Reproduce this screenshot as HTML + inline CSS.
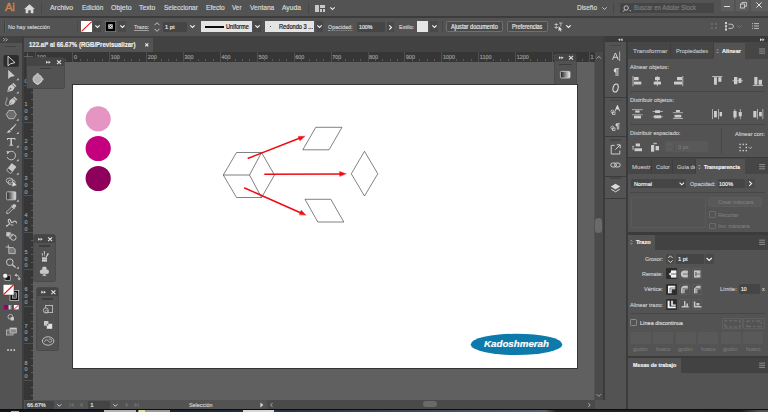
<!DOCTYPE html>
<html>
<head>
<meta charset="utf-8">
<style>
html,body{margin:0;padding:0;}
body{width:768px;height:412px;overflow:hidden;background:#535353;position:relative;font-family:"Liberation Sans",sans-serif;font-size:7px;color:#d6d6d6;}
.a{position:absolute;}
.t{position:absolute;white-space:nowrap;line-height:1;-webkit-text-stroke:0.18px currentColor;}
.m{font-size:7.6px;color:#dcdcdc;top:4.2px;}
.dk{background:#424242;}
.in{position:absolute;background:#454545;border-radius:1px;}
.bd{color:#f0f0f0;font-weight:bold;}
svg{position:absolute;overflow:visible;}
</style>
</head>
<body>
<!-- ===== base regions ===== -->
<div class="a" id="menubar" style="left:0;top:0;width:768px;height:16px;background:#535353;"></div>
<div class="a" style="left:0;top:16px;width:768px;height:1.9px;background:#3c3c3c;"></div>
<div class="a" id="ctrlbar" style="left:0;top:17.7px;width:768px;height:18.2px;background:#535353;"></div>
<div class="a" style="left:0;top:35.9px;width:768px;height:7px;background:#3e3e3e;"></div>

<!-- left toolbar -->
<div class="a" style="left:0;top:36px;width:23.5px;height:373px;background:#535353;"></div>
<div class="a" style="left:0;top:36px;width:23.5px;height:6.5px;background:#424242;"></div>
<div class="a" style="left:22px;top:36px;width:1.6px;height:373px;background:#3e3e3e;"></div>

<!-- document tab bar -->
<div class="a dk" style="left:24px;top:36px;width:581px;height:16.5px;"></div>
<div class="a" style="left:24px;top:37.5px;width:128.5px;height:15px;background:#535353;"></div>
<div class="t bd" style="left:29px;top:41.2px;font-size:7.4px;transform:scaleX(0.8203);transform-origin:0 50%;">122.ai* al 66.67% (RGB/Previsualizar)</div>

<!-- canvas -->
<div class="a" id="canvas" style="left:32.8px;top:61.5px;width:561.7px;height:338.1px;background:#606060;"></div>
<!-- rulers -->
<div class="a" id="hruler" style="left:23.6px;top:52.3px;width:571px;height:9.3px;background:#363636;"></div>
<div class="a" id="vruler" style="left:23.6px;top:61px;width:9.2px;height:338.6px;background:#363636;"></div>

<!-- artboard -->
<div class="a" id="artboard" style="left:71.9px;top:84.2px;width:503.9px;height:282.8px;background:#fff;border:1.1px solid #343434;"></div>

<!-- h ruler -->
<div class="a" style="left:35.4px;top:52.3px;width:0.7px;height:9.3px;background:#4e4e4e;"></div>
<div class="t" style="left:37.0px;top:54.5px;font-size:5.4px;color:#9c9c9c;">100</div>
<div class="a" style="left:42.8px;top:59.2px;width:0.6px;height:1.8px;background:#5a5a5a;"></div>
<div class="a" style="left:50.2px;top:59.2px;width:0.6px;height:1.8px;background:#5a5a5a;"></div>
<div class="a" style="left:57.5px;top:59.2px;width:0.6px;height:1.8px;background:#5a5a5a;"></div>
<div class="a" style="left:64.9px;top:59.2px;width:0.6px;height:1.8px;background:#5a5a5a;"></div>
<div class="a" style="left:72.3px;top:52.3px;width:0.7px;height:9.3px;background:#4e4e4e;"></div>
<div class="t" style="left:73.9px;top:54.5px;font-size:5.4px;color:#9c9c9c;">0</div>
<div class="a" style="left:79.7px;top:59.2px;width:0.6px;height:1.8px;background:#5a5a5a;"></div>
<div class="a" style="left:87.1px;top:59.2px;width:0.6px;height:1.8px;background:#5a5a5a;"></div>
<div class="a" style="left:94.4px;top:59.2px;width:0.6px;height:1.8px;background:#5a5a5a;"></div>
<div class="a" style="left:101.8px;top:59.2px;width:0.6px;height:1.8px;background:#5a5a5a;"></div>
<div class="a" style="left:109.2px;top:52.3px;width:0.7px;height:9.3px;background:#4e4e4e;"></div>
<div class="t" style="left:110.8px;top:54.5px;font-size:5.4px;color:#9c9c9c;">100</div>
<div class="a" style="left:116.6px;top:59.2px;width:0.6px;height:1.8px;background:#5a5a5a;"></div>
<div class="a" style="left:124.0px;top:59.2px;width:0.6px;height:1.8px;background:#5a5a5a;"></div>
<div class="a" style="left:131.3px;top:59.2px;width:0.6px;height:1.8px;background:#5a5a5a;"></div>
<div class="a" style="left:138.7px;top:59.2px;width:0.6px;height:1.8px;background:#5a5a5a;"></div>
<div class="a" style="left:146.1px;top:52.3px;width:0.7px;height:9.3px;background:#4e4e4e;"></div>
<div class="t" style="left:147.7px;top:54.5px;font-size:5.4px;color:#9c9c9c;">200</div>
<div class="a" style="left:153.5px;top:59.2px;width:0.6px;height:1.8px;background:#5a5a5a;"></div>
<div class="a" style="left:160.9px;top:59.2px;width:0.6px;height:1.8px;background:#5a5a5a;"></div>
<div class="a" style="left:168.2px;top:59.2px;width:0.6px;height:1.8px;background:#5a5a5a;"></div>
<div class="a" style="left:175.6px;top:59.2px;width:0.6px;height:1.8px;background:#5a5a5a;"></div>
<div class="a" style="left:183.0px;top:52.3px;width:0.7px;height:9.3px;background:#4e4e4e;"></div>
<div class="t" style="left:184.6px;top:54.5px;font-size:5.4px;color:#9c9c9c;">300</div>
<div class="a" style="left:190.4px;top:59.2px;width:0.6px;height:1.8px;background:#5a5a5a;"></div>
<div class="a" style="left:197.8px;top:59.2px;width:0.6px;height:1.8px;background:#5a5a5a;"></div>
<div class="a" style="left:205.1px;top:59.2px;width:0.6px;height:1.8px;background:#5a5a5a;"></div>
<div class="a" style="left:212.5px;top:59.2px;width:0.6px;height:1.8px;background:#5a5a5a;"></div>
<div class="a" style="left:219.9px;top:52.3px;width:0.7px;height:9.3px;background:#4e4e4e;"></div>
<div class="t" style="left:221.5px;top:54.5px;font-size:5.4px;color:#9c9c9c;">400</div>
<div class="a" style="left:227.3px;top:59.2px;width:0.6px;height:1.8px;background:#5a5a5a;"></div>
<div class="a" style="left:234.7px;top:59.2px;width:0.6px;height:1.8px;background:#5a5a5a;"></div>
<div class="a" style="left:242.0px;top:59.2px;width:0.6px;height:1.8px;background:#5a5a5a;"></div>
<div class="a" style="left:249.4px;top:59.2px;width:0.6px;height:1.8px;background:#5a5a5a;"></div>
<div class="a" style="left:256.8px;top:52.3px;width:0.7px;height:9.3px;background:#4e4e4e;"></div>
<div class="t" style="left:258.4px;top:54.5px;font-size:5.4px;color:#9c9c9c;">500</div>
<div class="a" style="left:264.2px;top:59.2px;width:0.6px;height:1.8px;background:#5a5a5a;"></div>
<div class="a" style="left:271.6px;top:59.2px;width:0.6px;height:1.8px;background:#5a5a5a;"></div>
<div class="a" style="left:278.9px;top:59.2px;width:0.6px;height:1.8px;background:#5a5a5a;"></div>
<div class="a" style="left:286.3px;top:59.2px;width:0.6px;height:1.8px;background:#5a5a5a;"></div>
<div class="a" style="left:293.7px;top:52.3px;width:0.7px;height:9.3px;background:#4e4e4e;"></div>
<div class="t" style="left:295.3px;top:54.5px;font-size:5.4px;color:#9c9c9c;">600</div>
<div class="a" style="left:301.1px;top:59.2px;width:0.6px;height:1.8px;background:#5a5a5a;"></div>
<div class="a" style="left:308.5px;top:59.2px;width:0.6px;height:1.8px;background:#5a5a5a;"></div>
<div class="a" style="left:315.8px;top:59.2px;width:0.6px;height:1.8px;background:#5a5a5a;"></div>
<div class="a" style="left:323.2px;top:59.2px;width:0.6px;height:1.8px;background:#5a5a5a;"></div>
<div class="a" style="left:330.6px;top:52.3px;width:0.7px;height:9.3px;background:#4e4e4e;"></div>
<div class="t" style="left:332.2px;top:54.5px;font-size:5.4px;color:#9c9c9c;">700</div>
<div class="a" style="left:338.0px;top:59.2px;width:0.6px;height:1.8px;background:#5a5a5a;"></div>
<div class="a" style="left:345.4px;top:59.2px;width:0.6px;height:1.8px;background:#5a5a5a;"></div>
<div class="a" style="left:352.7px;top:59.2px;width:0.6px;height:1.8px;background:#5a5a5a;"></div>
<div class="a" style="left:360.1px;top:59.2px;width:0.6px;height:1.8px;background:#5a5a5a;"></div>
<div class="a" style="left:367.5px;top:52.3px;width:0.7px;height:9.3px;background:#4e4e4e;"></div>
<div class="t" style="left:369.1px;top:54.5px;font-size:5.4px;color:#9c9c9c;">800</div>
<div class="a" style="left:374.9px;top:59.2px;width:0.6px;height:1.8px;background:#5a5a5a;"></div>
<div class="a" style="left:382.3px;top:59.2px;width:0.6px;height:1.8px;background:#5a5a5a;"></div>
<div class="a" style="left:389.6px;top:59.2px;width:0.6px;height:1.8px;background:#5a5a5a;"></div>
<div class="a" style="left:397.0px;top:59.2px;width:0.6px;height:1.8px;background:#5a5a5a;"></div>
<div class="a" style="left:404.4px;top:52.3px;width:0.7px;height:9.3px;background:#4e4e4e;"></div>
<div class="t" style="left:406.0px;top:54.5px;font-size:5.4px;color:#9c9c9c;">900</div>
<div class="a" style="left:411.8px;top:59.2px;width:0.6px;height:1.8px;background:#5a5a5a;"></div>
<div class="a" style="left:419.2px;top:59.2px;width:0.6px;height:1.8px;background:#5a5a5a;"></div>
<div class="a" style="left:426.5px;top:59.2px;width:0.6px;height:1.8px;background:#5a5a5a;"></div>
<div class="a" style="left:433.9px;top:59.2px;width:0.6px;height:1.8px;background:#5a5a5a;"></div>
<div class="a" style="left:441.3px;top:52.3px;width:0.7px;height:9.3px;background:#4e4e4e;"></div>
<div class="t" style="left:442.9px;top:54.5px;font-size:5.4px;color:#9c9c9c;">1000</div>
<div class="a" style="left:448.7px;top:59.2px;width:0.6px;height:1.8px;background:#5a5a5a;"></div>
<div class="a" style="left:456.1px;top:59.2px;width:0.6px;height:1.8px;background:#5a5a5a;"></div>
<div class="a" style="left:463.4px;top:59.2px;width:0.6px;height:1.8px;background:#5a5a5a;"></div>
<div class="a" style="left:470.8px;top:59.2px;width:0.6px;height:1.8px;background:#5a5a5a;"></div>
<div class="a" style="left:478.2px;top:52.3px;width:0.7px;height:9.3px;background:#4e4e4e;"></div>
<div class="t" style="left:479.8px;top:54.5px;font-size:5.4px;color:#9c9c9c;">1100</div>
<div class="a" style="left:485.6px;top:59.2px;width:0.6px;height:1.8px;background:#5a5a5a;"></div>
<div class="a" style="left:493.0px;top:59.2px;width:0.6px;height:1.8px;background:#5a5a5a;"></div>
<div class="a" style="left:500.3px;top:59.2px;width:0.6px;height:1.8px;background:#5a5a5a;"></div>
<div class="a" style="left:507.7px;top:59.2px;width:0.6px;height:1.8px;background:#5a5a5a;"></div>
<div class="a" style="left:515.1px;top:52.3px;width:0.7px;height:9.3px;background:#4e4e4e;"></div>
<div class="t" style="left:516.7px;top:54.5px;font-size:5.4px;color:#9c9c9c;">1200</div>
<div class="a" style="left:522.5px;top:59.2px;width:0.6px;height:1.8px;background:#5a5a5a;"></div>
<div class="a" style="left:529.9px;top:59.2px;width:0.6px;height:1.8px;background:#5a5a5a;"></div>
<div class="a" style="left:537.2px;top:59.2px;width:0.6px;height:1.8px;background:#5a5a5a;"></div>
<div class="a" style="left:544.6px;top:59.2px;width:0.6px;height:1.8px;background:#5a5a5a;"></div>
<div class="a" style="left:552.0px;top:52.3px;width:0.7px;height:9.3px;background:#4e4e4e;"></div>
<div class="t" style="left:553.6px;top:54.5px;font-size:5.4px;color:#9c9c9c;">1300</div>
<div class="a" style="left:559.4px;top:59.2px;width:0.6px;height:1.8px;background:#5a5a5a;"></div>
<div class="a" style="left:566.8px;top:59.2px;width:0.6px;height:1.8px;background:#5a5a5a;"></div>
<div class="a" style="left:574.1px;top:59.2px;width:0.6px;height:1.8px;background:#5a5a5a;"></div>
<div class="a" style="left:581.5px;top:59.2px;width:0.6px;height:1.8px;background:#5a5a5a;"></div>
<div class="a" style="left:588.9px;top:52.3px;width:0.7px;height:9.3px;background:#4e4e4e;"></div>
<!-- v ruler -->
<div class="a" style="left:23.6px;top:84.6px;width:9.2px;height:0.7px;background:#4e4e4e;"></div>
<div class="t" style="left:24.6px;top:78.9px;font-size:5.4px;color:#9c9c9c;">0</div>
<div class="a" style="left:30.6px;top:92.0px;width:2.2px;height:0.6px;background:#5a5a5a;"></div>
<div class="a" style="left:30.6px;top:99.4px;width:2.2px;height:0.6px;background:#5a5a5a;"></div>
<div class="a" style="left:30.6px;top:106.7px;width:2.2px;height:0.6px;background:#5a5a5a;"></div>
<div class="a" style="left:30.6px;top:114.1px;width:2.2px;height:0.6px;background:#5a5a5a;"></div>
<div class="a" style="left:23.6px;top:121.5px;width:9.2px;height:0.7px;background:#4e4e4e;"></div>
<div class="t" style="left:24.6px;top:102.2px;font-size:5.4px;color:#9c9c9c;">1</div>
<div class="t" style="left:24.6px;top:109.0px;font-size:5.4px;color:#9c9c9c;">0</div>
<div class="t" style="left:24.6px;top:115.8px;font-size:5.4px;color:#9c9c9c;">0</div>
<div class="a" style="left:30.6px;top:128.9px;width:2.2px;height:0.6px;background:#5a5a5a;"></div>
<div class="a" style="left:30.6px;top:136.3px;width:2.2px;height:0.6px;background:#5a5a5a;"></div>
<div class="a" style="left:30.6px;top:143.6px;width:2.2px;height:0.6px;background:#5a5a5a;"></div>
<div class="a" style="left:30.6px;top:151.0px;width:2.2px;height:0.6px;background:#5a5a5a;"></div>
<div class="a" style="left:23.6px;top:158.4px;width:9.2px;height:0.7px;background:#4e4e4e;"></div>
<div class="t" style="left:24.6px;top:139.1px;font-size:5.4px;color:#9c9c9c;">2</div>
<div class="t" style="left:24.6px;top:145.9px;font-size:5.4px;color:#9c9c9c;">0</div>
<div class="t" style="left:24.6px;top:152.7px;font-size:5.4px;color:#9c9c9c;">0</div>
<div class="a" style="left:30.6px;top:165.8px;width:2.2px;height:0.6px;background:#5a5a5a;"></div>
<div class="a" style="left:30.6px;top:173.2px;width:2.2px;height:0.6px;background:#5a5a5a;"></div>
<div class="a" style="left:30.6px;top:180.5px;width:2.2px;height:0.6px;background:#5a5a5a;"></div>
<div class="a" style="left:30.6px;top:187.9px;width:2.2px;height:0.6px;background:#5a5a5a;"></div>
<div class="a" style="left:23.6px;top:195.3px;width:9.2px;height:0.7px;background:#4e4e4e;"></div>
<div class="t" style="left:24.6px;top:176.0px;font-size:5.4px;color:#9c9c9c;">3</div>
<div class="t" style="left:24.6px;top:182.8px;font-size:5.4px;color:#9c9c9c;">0</div>
<div class="t" style="left:24.6px;top:189.6px;font-size:5.4px;color:#9c9c9c;">0</div>
<div class="a" style="left:30.6px;top:202.7px;width:2.2px;height:0.6px;background:#5a5a5a;"></div>
<div class="a" style="left:30.6px;top:210.1px;width:2.2px;height:0.6px;background:#5a5a5a;"></div>
<div class="a" style="left:30.6px;top:217.4px;width:2.2px;height:0.6px;background:#5a5a5a;"></div>
<div class="a" style="left:30.6px;top:224.8px;width:2.2px;height:0.6px;background:#5a5a5a;"></div>
<div class="a" style="left:23.6px;top:232.2px;width:9.2px;height:0.7px;background:#4e4e4e;"></div>
<div class="t" style="left:24.6px;top:212.9px;font-size:5.4px;color:#9c9c9c;">4</div>
<div class="t" style="left:24.6px;top:219.7px;font-size:5.4px;color:#9c9c9c;">0</div>
<div class="t" style="left:24.6px;top:226.5px;font-size:5.4px;color:#9c9c9c;">0</div>
<div class="a" style="left:30.6px;top:239.6px;width:2.2px;height:0.6px;background:#5a5a5a;"></div>
<div class="a" style="left:30.6px;top:247.0px;width:2.2px;height:0.6px;background:#5a5a5a;"></div>
<div class="a" style="left:30.6px;top:254.3px;width:2.2px;height:0.6px;background:#5a5a5a;"></div>
<div class="a" style="left:30.6px;top:261.7px;width:2.2px;height:0.6px;background:#5a5a5a;"></div>
<div class="a" style="left:23.6px;top:269.1px;width:9.2px;height:0.7px;background:#4e4e4e;"></div>
<div class="t" style="left:24.6px;top:249.8px;font-size:5.4px;color:#9c9c9c;">5</div>
<div class="t" style="left:24.6px;top:256.6px;font-size:5.4px;color:#9c9c9c;">0</div>
<div class="t" style="left:24.6px;top:263.4px;font-size:5.4px;color:#9c9c9c;">0</div>
<div class="a" style="left:30.6px;top:276.5px;width:2.2px;height:0.6px;background:#5a5a5a;"></div>
<div class="a" style="left:30.6px;top:283.9px;width:2.2px;height:0.6px;background:#5a5a5a;"></div>
<div class="a" style="left:30.6px;top:291.2px;width:2.2px;height:0.6px;background:#5a5a5a;"></div>
<div class="a" style="left:30.6px;top:298.6px;width:2.2px;height:0.6px;background:#5a5a5a;"></div>
<div class="a" style="left:23.6px;top:306.0px;width:9.2px;height:0.7px;background:#4e4e4e;"></div>
<div class="t" style="left:24.6px;top:286.7px;font-size:5.4px;color:#9c9c9c;">6</div>
<div class="t" style="left:24.6px;top:293.5px;font-size:5.4px;color:#9c9c9c;">0</div>
<div class="t" style="left:24.6px;top:300.3px;font-size:5.4px;color:#9c9c9c;">0</div>
<div class="a" style="left:30.6px;top:313.4px;width:2.2px;height:0.6px;background:#5a5a5a;"></div>
<div class="a" style="left:30.6px;top:320.8px;width:2.2px;height:0.6px;background:#5a5a5a;"></div>
<div class="a" style="left:30.6px;top:328.1px;width:2.2px;height:0.6px;background:#5a5a5a;"></div>
<div class="a" style="left:30.6px;top:335.5px;width:2.2px;height:0.6px;background:#5a5a5a;"></div>
<div class="a" style="left:23.6px;top:342.9px;width:9.2px;height:0.7px;background:#4e4e4e;"></div>
<div class="t" style="left:24.6px;top:323.6px;font-size:5.4px;color:#9c9c9c;">7</div>
<div class="t" style="left:24.6px;top:330.4px;font-size:5.4px;color:#9c9c9c;">0</div>
<div class="t" style="left:24.6px;top:337.2px;font-size:5.4px;color:#9c9c9c;">0</div>
<div class="a" style="left:30.6px;top:350.3px;width:2.2px;height:0.6px;background:#5a5a5a;"></div>
<div class="a" style="left:30.6px;top:357.7px;width:2.2px;height:0.6px;background:#5a5a5a;"></div>
<div class="a" style="left:30.6px;top:365.0px;width:2.2px;height:0.6px;background:#5a5a5a;"></div>
<div class="a" style="left:30.6px;top:372.4px;width:2.2px;height:0.6px;background:#5a5a5a;"></div>
<div class="a" style="left:23.6px;top:379.8px;width:9.2px;height:0.7px;background:#4e4e4e;"></div>
<div class="t" style="left:24.6px;top:360.5px;font-size:5.4px;color:#9c9c9c;">8</div>
<div class="t" style="left:24.6px;top:367.3px;font-size:5.4px;color:#9c9c9c;">0</div>
<div class="t" style="left:24.6px;top:374.1px;font-size:5.4px;color:#9c9c9c;">0</div>
<div class="a" style="left:30.6px;top:387.2px;width:2.2px;height:0.6px;background:#5a5a5a;"></div>
<div class="a" style="left:30.6px;top:394.6px;width:2.2px;height:0.6px;background:#5a5a5a;"></div>
<div class="a" style="left:30.6px;top:77.2px;width:2.2px;height:0.6px;background:#5a5a5a;"></div>
<div class="a" style="left:30.6px;top:69.8px;width:2.2px;height:0.6px;background:#5a5a5a;"></div>
<div class="a" style="left:30.6px;top:62.5px;width:2.2px;height:0.6px;background:#5a5a5a;"></div>
<div class="a" style="left:23.6px;top:52.3px;width:9.2px;height:9.3px;background:#363636;"></div>
<div class="a" style="left:24px;top:55.6px;width:9px;height:0.6px;background:#626262;"></div>
<div class="a" style="left:27.2px;top:52.5px;width:0.6px;height:9.3px;background:#626262;"></div>
<!-- artwork -->
<svg style="left:0;top:0;" width="768" height="412" viewBox="0 0 768 412">
<circle cx="98.2" cy="118.8" r="12.6" fill="#e495c4"/>
<circle cx="98.2" cy="148.5" r="12.6" fill="#c4007f"/>
<circle cx="98.2" cy="178.5" r="12.6" fill="#8e005c"/>
<g fill="none" stroke="#2e2e2e" stroke-width="0.6">
<path d="M236.5 152.5 L261.5 152.5 L274.5 175 L261.5 197.5 L236.5 197.5 L223.3 175 Z"/>
<path d="M223.3 175 L249.5 175 M249.5 175 L261.5 152.5 M249.5 175 L261.5 197.5" stroke="#2a2a2a" stroke-width="0.6"/>
<path d="M315.8 127.3 L342 127.3 L329 149.8 L302.8 149.8 Z"/>
<path d="M364.5 151.3 L377.8 173.8 L364.5 196 L351.3 173.8 Z"/>
<path d="M305 199.3 L330.8 199.3 L343.8 222 L317.8 222 Z"/>
</g>
<g stroke="#f00a12" stroke-width="1.5" fill="#ee0a12" stroke-linecap="round">
<path d="M248.3 158.2 L300 138"/><path d="M304.8 136.2 L298.2 136.5 L299.9 140.7 Z" stroke-width="0.4"/>
<path d="M264.8 174.3 L340 173.9"/><path d="M346 173.8 L339.6 171.5 L339.7 176.2 Z" stroke-width="0.4"/>
<path d="M244.6 188 L300.5 212.7"/><path d="M305.8 215 L301.2 210.2 L299.3 214.6 Z" stroke-width="0.4"/>
</g>
<ellipse cx="516.5" cy="344.4" rx="45.8" ry="10.7" fill="#0c7aaa"/>
</svg>
<div class="t" style="left:484px;top:340px;font-size:9.2px;font-weight:bold;font-style:italic;color:#fff;transform:scaleX(1.0607);transform-origin:0 50%;">Kadoshmerah</div>

<!-- scrollbars / status -->
<div class="a" style="left:594.5px;top:52.3px;width:9px;height:347.3px;background:#4a4a4a;"></div>

<div class="a" style="left:603.5px;top:36px;width:1.5px;height:372px;background:#383838;"></div>

<!-- right dock -->
<div class="a" style="left:603.4px;top:36px;width:164.60px;height:373.00px;background:#3b3b3b;"></div>
<div class="a" style="left:603.4px;top:36px;width:1.80px;height:17.00px;background:#3e3e3e;"></div>
<div class="a" style="left:605.2px;top:42.3px;width:20.40px;height:366.70px;background:#535353;"></div>
<div class="a" style="left:610px;top:44.6px;width:10.80px;height:1.50px;background:#464646;"></div>
<div class="a" style="left:605.2px;top:97px;width:20.40px;height:1.00px;background:#3b3b3b;"></div>
<div class="a" style="left:610px;top:99.6px;width:10.80px;height:1.50px;background:#464646;"></div>
<div class="a" style="left:605.2px;top:136.4px;width:20.40px;height:1.00px;background:#3b3b3b;"></div>
<div class="a" style="left:610px;top:139.0px;width:10.80px;height:1.50px;background:#464646;"></div>
<div class="a" style="left:605.2px;top:175.6px;width:20.40px;height:1.00px;background:#3b3b3b;"></div>
<div class="a" style="left:610px;top:177.1px;width:10.80px;height:1.50px;background:#464646;"></div>
<div class="a" style="left:605.2px;top:197.9px;width:20.40px;height:1.00px;background:#3b3b3b;"></div>
<div class="a" style="left:627.6px;top:42.3px;width:140.40px;height:16.50px;background:#464646;"></div>
<div class="a" style="left:713.3px;top:43.4px;width:31.70px;height:15.40px;background:#535353;"></div>
<div class="a" style="left:669.8px;top:43.4px;width:0.80px;height:14.80px;background:#3e3e3e;"></div>
<div class="a" style="left:712.6px;top:43.4px;width:0.70px;height:14.80px;background:#3e3e3e;"></div>
<div class="a" style="left:627.6px;top:58.8px;width:140.40px;height:98.20px;background:#535353;"></div>
<div class="t" style="left:632.7px;top:48.10px;font-size:6.2px;color:#bdbdbd;transform:scaleX(1.0308);transform-origin:0 50%;">Transformar</div>
<div class="t" style="left:675.8px;top:48.10px;font-size:6.2px;color:#bdbdbd;transform:scaleX(0.9209);transform-origin:0 50%;">Propiedades</div>
<div class="t" style="left:722px;top:48.10px;font-size:6.2px;color:#f2f2f2;font-weight:bold;transform:scaleX(0.9054);transform-origin:0 50%;">Alinear</div>
<div class="t" style="left:630px;top:63.60px;font-size:6.2px;color:#c8c8c8;transform:scaleX(0.9073);transform-origin:0 50%;">Alinear objetos:</div>
<div class="a" style="left:630px;top:91.2px;width:135.40px;height:0.70px;background:#474747;"></div>
<div class="t" style="left:630px;top:96.90px;font-size:6.2px;color:#c8c8c8;transform:scaleX(0.9203);transform-origin:0 50%;">Distribuir objetos:</div>
<div class="a" style="left:630px;top:123.5px;width:135.40px;height:0.70px;background:#474747;"></div>
<div class="t" style="left:630px;top:130.20px;font-size:6.2px;color:#c8c8c8;transform:scaleX(0.8990);transform-origin:0 50%;">Distribuir espaciado:</div>
<div class="t" style="left:735.3px;top:130.70px;font-size:6.2px;color:#c8c8c8;transform:scaleX(0.9086);transform-origin:0 50%;">Alinear con:</div>
<div class="a" style="left:721.4px;top:128.4px;width:0.70px;height:25.80px;background:#474747;"></div>
<div class="a" style="left:665.3px;top:141px;width:42.80px;height:11.40px;background:#595959;border-radius:1px;"></div>
<div class="a" style="left:674px;top:141px;width:0.60px;height:11.40px;background:#535353;"></div>
<div class="t" style="left:677.5px;top:143.90px;font-size:6.2px;color:#787878;transform:scaleX(0.8972);transform-origin:0 50%;">0 px</div>
<div class="a" style="left:627.6px;top:158px;width:140.40px;height:16.00px;background:#464646;"></div>
<div class="a" style="left:696px;top:159px;width:49.00px;height:15.00px;background:#535353;"></div>
<div class="a" style="left:651.4px;top:159px;width:0.70px;height:14.40px;background:#3e3e3e;"></div>
<div class="a" style="left:672.3px;top:159px;width:0.70px;height:14.40px;background:#3e3e3e;"></div>
<div class="a" style="left:695.4px;top:159px;width:0.60px;height:14.40px;background:#3e3e3e;"></div>
<div class="a" style="left:627.6px;top:174px;width:140.40px;height:58.30px;background:#535353;"></div>
<div class="t" style="left:632.3px;top:163.80px;font-size:6.2px;color:#bdbdbd;transform:scaleX(0.9777);transform-origin:0 50%;">Muestr</div>
<div class="t" style="left:656.1px;top:163.80px;font-size:6.2px;color:#bdbdbd;transform:scaleX(0.9326);transform-origin:0 50%;">Color</div>
<div class="a" style="left:676.7px;top:162px;width:18.7px;height:10px;overflow:hidden;"><div class="t" style="left:0px;top:1.80px;font-size:6.2px;color:#bdbdbd;transform:scaleX(0.8942);transform-origin:0 50%;">Guía de</div>
</div>
<div class="t" style="left:704.3px;top:163.80px;font-size:6.2px;color:#f2f2f2;font-weight:bold;transform:scaleX(0.8578);transform-origin:0 50%;">Transparencia</div>
<div class="a" style="left:631px;top:178.8px;width:55.00px;height:9.70px;background:#454545;border-radius:1.5px;"></div>
<div class="t" style="left:634px;top:180.60px;font-size:6.2px;color:#f0f0f0;transform:scaleX(0.9021);transform-origin:0 50%;">Normal</div>
<div class="t" style="left:689.6px;top:180.60px;font-size:6.2px;color:#c8c8c8;transform:scaleX(0.8966);transform-origin:0 50%;">Opacidad:</div>
<div class="a" style="left:717.6px;top:178.6px;width:27.40px;height:9.90px;background:#454545;border-radius:1.5px;"></div>
<div class="t" style="left:719.1px;top:180.60px;font-size:6.2px;color:#f0f0f0;transform:scaleX(0.8845);transform-origin:0 50%;">100%</div>
<div class="a" style="left:746px;top:178.6px;width:9.00px;height:9.90px;background:#4b4b4b;border-radius:1px;"></div>
<div class="a" style="left:630px;top:192.4px;width:135.40px;height:0.70px;background:#474747;"></div>
<div class="a" style="left:630.7px;top:197.3px;width:75.50px;height:31.00px;background:#535353;box-sizing:border-box;border:0.7px solid #5a5a5a;border-radius:1px;"></div>
<div class="a" style="left:708.1px;top:196.6px;width:54.40px;height:10.90px;background:#595959;box-sizing:border-box;border:0.7px solid #5c5c5c;border-radius:1.5px;"></div>
<div class="t" style="left:717.6px;top:199.00px;font-size:6.2px;color:#787878;transform:scaleX(0.8675);transform-origin:0 50%;">Crear máscara</div>
<div class="a" style="left:709.1px;top:211.4px;width:6.80px;height:6.30px;background:#535353;box-sizing:border-box;border:0.7px solid #6a6a6a;border-radius:1px;"></div>
<div class="t" style="left:718.3px;top:211.70px;font-size:6.2px;color:#787878;transform:scaleX(0.8595);transform-origin:0 50%;">Recortar</div>
<div class="a" style="left:709.1px;top:222.5px;width:6.80px;height:6.40px;background:#535353;box-sizing:border-box;border:0.7px solid #6a6a6a;border-radius:1px;"></div>
<div class="t" style="left:718.3px;top:222.80px;font-size:6.2px;color:#787878;transform:scaleX(0.9037);transform-origin:0 50%;">Inv. máscara</div>
<div class="a" style="left:627.6px;top:234.5px;width:140.40px;height:15.30px;background:#424242;"></div>
<div class="a" style="left:627.6px;top:234.5px;width:27.50px;height:15.30px;background:#535353;"></div>
<div class="a" style="left:627.6px;top:249.8px;width:140.40px;height:106.20px;background:#535353;"></div>
<div class="t" style="left:635.7px;top:239.20px;font-size:6.2px;color:#f2f2f2;font-weight:bold;transform:scaleX(0.9028);transform-origin:0 50%;">Trazo</div>
<div class="t" style="left:645px;top:256.40px;font-size:6.2px;color:#c8c8c8;transform:scaleX(0.8769);transform-origin:0 50%;">Grosor:</div>
<div class="a" style="left:666.3px;top:254.2px;width:8.20px;height:9.80px;background:#494949;border-radius:1px;"></div>
<div class="a" style="left:676px;top:254.2px;width:27.60px;height:9.80px;background:#454545;border-radius:1px;"></div>
<div class="t" style="left:677.5px;top:256.20px;font-size:6.2px;color:#f0f0f0;transform:scaleX(0.9392);transform-origin:0 50%;">1 pt</div>
<div class="a" style="left:704.7px;top:254.2px;width:9.30px;height:9.80px;background:#494949;border-radius:1px;"></div>
<div class="t" style="left:642.3px;top:271.10px;font-size:6.2px;color:#c8c8c8;transform:scaleX(0.8807);transform-origin:0 50%;">Remate:</div>
<div class="t" style="left:644px;top:286.30px;font-size:6.2px;color:#c8c8c8;transform:scaleX(0.9007);transform-origin:0 50%;">Vértice:</div>
<div class="t" style="left:630px;top:301.90px;font-size:6.2px;color:#c8c8c8;transform:scaleX(0.9021);transform-origin:0 50%;">Alinear trazo:</div>
<div class="a" style="left:665.8px;top:268.4px;width:11.20px;height:10.60px;background:#2d2d2d;border-radius:1px;"></div>
<div class="a" style="left:678.9px;top:268.4px;width:10.70px;height:10.60px;background:#535353;box-sizing:border-box;border:0.6px solid #5c5c5c;border-radius:1px;"></div>
<div class="a" style="left:692px;top:268.4px;width:10.30px;height:10.60px;background:#535353;box-sizing:border-box;border:0.6px solid #5c5c5c;border-radius:1px;"></div>
<div class="a" style="left:665.8px;top:283.9px;width:11.20px;height:10.70px;background:#2d2d2d;border-radius:1px;"></div>
<div class="a" style="left:678.9px;top:283.9px;width:10.70px;height:10.70px;background:#535353;box-sizing:border-box;border:0.6px solid #5c5c5c;border-radius:1px;"></div>
<div class="a" style="left:692px;top:283.9px;width:10.30px;height:10.70px;background:#535353;box-sizing:border-box;border:0.6px solid #5c5c5c;border-radius:1px;"></div>
<div class="a" style="left:665.8px;top:299.1px;width:11.20px;height:10.50px;background:#2d2d2d;border-radius:1px;"></div>
<div class="a" style="left:678.9px;top:299.1px;width:10.70px;height:10.50px;background:#535353;box-sizing:border-box;border:0.6px solid #5c5c5c;border-radius:1px;"></div>
<div class="a" style="left:692px;top:299.1px;width:10.30px;height:10.50px;background:#535353;box-sizing:border-box;border:0.6px solid #5c5c5c;border-radius:1px;"></div>
<div class="t" style="left:720.1px;top:286.10px;font-size:6.2px;color:#c8c8c8;transform:scaleX(0.8989);transform-origin:0 50%;">Límite:</div>
<div class="a" style="left:738.7px;top:283.9px;width:21.40px;height:9.70px;background:#454545;border-radius:1.5px;"></div>
<div class="t" style="left:741.4px;top:285.90px;font-size:6.2px;color:#f0f0f0;transform:scaleX(0.8127);transform-origin:0 50%;">10</div>
<div class="t" style="left:762.4px;top:286.10px;font-size:6.2px;color:#c8c8c8;transform:scaleX(0.9051);transform-origin:0 50%;">x</div>
<div class="a" style="left:630px;top:313.2px;width:135.40px;height:0.70px;background:#474747;"></div>
<div class="a" style="left:630.4px;top:319.3px;width:7.10px;height:7.00px;background:#535353;box-sizing:border-box;border:0.8px solid #8a8a8a;border-radius:1.2px;"></div>
<div class="t" style="left:640.4px;top:320.10px;font-size:6.2px;color:#dedede;transform:scaleX(0.8843);transform-origin:0 50%;">Línea discontinua</div>
<div class="a" style="left:722px;top:317.6px;width:21.10px;height:11.90px;background:#535353;box-sizing:border-box;border:0.6px solid #5e5e5e;border-radius:1px;"></div>
<div class="a" style="left:743.1px;top:317.6px;width:21.90px;height:11.90px;background:#535353;box-sizing:border-box;border:0.6px solid #5e5e5e;border-radius:1px;"></div>
<div class="a" style="left:630.5px;top:332.2px;width:20.00px;height:11.80px;background:#595959;border-radius:1px;"></div>
<div class="t" style="left:633.3px;top:346.20px;font-size:6.2px;color:#747474;transform:scaleX(0.9511);transform-origin:0 50%;">guión</div>
<div class="a" style="left:653.0px;top:332.2px;width:20.00px;height:11.80px;background:#595959;border-radius:1px;"></div>
<div class="t" style="left:655.8px;top:346.20px;font-size:6.2px;color:#747474;transform:scaleX(0.8541);transform-origin:0 50%;">hueco</div>
<div class="a" style="left:675.5px;top:332.2px;width:20.00px;height:11.80px;background:#595959;border-radius:1px;"></div>
<div class="t" style="left:678.3px;top:346.20px;font-size:6.2px;color:#747474;transform:scaleX(0.9511);transform-origin:0 50%;">guión</div>
<div class="a" style="left:698.0px;top:332.2px;width:20.00px;height:11.80px;background:#595959;border-radius:1px;"></div>
<div class="t" style="left:700.8px;top:346.20px;font-size:6.2px;color:#747474;transform:scaleX(0.8541);transform-origin:0 50%;">hueco</div>
<div class="a" style="left:720.5px;top:332.2px;width:20.00px;height:11.80px;background:#595959;border-radius:1px;"></div>
<div class="t" style="left:723.3px;top:346.20px;font-size:6.2px;color:#747474;transform:scaleX(0.9511);transform-origin:0 50%;">guión</div>
<div class="a" style="left:743.0px;top:332.2px;width:20.00px;height:11.80px;background:#595959;border-radius:1px;"></div>
<div class="t" style="left:745.8px;top:346.20px;font-size:6.2px;color:#747474;transform:scaleX(0.8541);transform-origin:0 50%;">hueco</div>
<div class="a" style="left:627.6px;top:357.6px;width:140.40px;height:15.20px;background:#424242;"></div>
<div class="a" style="left:627.6px;top:357.6px;width:53.40px;height:15.20px;background:#535353;"></div>
<div class="a" style="left:627.6px;top:373.4px;width:140.40px;height:35.60px;background:#535353;"></div>
<div class="t" style="left:632.5px;top:362.20px;font-size:6.2px;color:#f2f2f2;font-weight:bold;transform:scaleX(0.8622);transform-origin:0 50%;">Mesas de trabajo</div>
<svg style="left:0;top:0" width="768" height="412" viewBox="0 0 768 412">
<path d="M620.2 38.2 v3 L618 39.7z M622.6 38.2 v3 L620.4 39.7z" fill="#d8d8d8"/><path d="M760 38.2 v3 L762.2 39.7z M762.4 38.2 v3 L764.6 39.7z" fill="#d8d8d8"/><path d="M759.1 49.0 h6 M759.1 51.1 h6 M759.1 53.2 h6" stroke="#a0a0a0" stroke-width="0.8"/><path d="M759.1 164.6 h6 M759.1 166.7 h6 M759.1 168.79999999999998 h6" stroke="#a0a0a0" stroke-width="0.8"/><path d="M759.1 240.2 h6 M759.1 242.29999999999998 h6 M759.1 244.39999999999998 h6" stroke="#a0a0a0" stroke-width="0.8"/><path d="M759.1 363.2 h6 M759.1 365.3 h6 M759.1 367.4 h6" stroke="#a0a0a0" stroke-width="0.8"/><path d="M716.7 50.4 L717.6 49.3 L718.5 50.4 M716.7 52.0 L717.6 53.1 L718.5 52.0" fill="none" stroke="#cfcfcf" stroke-width="0.6"/><path d="M698.5 166.1 L699.4 165.0 L700.3 166.1 M698.5 167.7 L699.4 168.8 L700.3 167.7" fill="none" stroke="#cfcfcf" stroke-width="0.6"/><path d="M630.5 241.5 L631.4 240.4 L632.3 241.5 M630.5 243.1 L631.4 244.2 L632.3 243.1" fill="none" stroke="#cfcfcf" stroke-width="0.6"/><g fill="#cdcdcd"><rect x="632.6" y="76" width="0.8" height="10.2"/><rect x="634" y="77" width="4.6" height="3.2"/><rect x="634" y="81.6" width="7.3" height="2.9"/><rect x="656.9" y="76" width="0.8" height="10.2"/><rect x="655" y="77" width="4.8" height="3.2"/><rect x="653.7" y="81.6" width="7.3" height="2.9"/><rect x="682.4" y="76" width="0.8" height="10.2"/><rect x="677" y="77" width="5" height="3.2"/><rect x="674" y="81.6" width="8" height="2.9"/><rect x="712" y="76" width="10.4" height="0.8"/><rect x="714" y="77.2" width="2.9" height="7.5"/><rect x="718.3" y="77.2" width="3.1" height="4.6"/><rect x="732.4" y="80.4" width="10.4" height="0.8"/><rect x="734" y="77" width="3.3" height="7.2"/><rect x="738.5" y="78.2" width="2.9" height="4.8"/><rect x="752.8" y="85" width="10.2" height="0.8"/><rect x="754.3" y="77" width="3.1" height="7.7"/><rect x="758.6" y="79.8" width="3.4" height="4.9"/><rect x="632" y="109.4" width="10.7" height="0.7"/><rect x="635.2" y="110.5" width="4.4" height="2.1"/><rect x="632" y="114.5" width="10.7" height="0.7"/><rect x="634" y="115.7" width="7" height="2.7"/><rect x="652.7" y="111.3" width="10.2" height="0.7"/><rect x="655.1" y="110.2" width="4.9" height="2.8"/><rect x="652.7" y="116.5" width="10.2" height="0.7"/><rect x="654.2" y="115.3" width="6.9" height="3"/><rect x="676" y="110" width="3.9" height="2.1"/><rect x="672.9" y="112.4" width="10.1" height="0.7"/><rect x="674.5" y="114.8" width="6.8" height="2.7"/><rect x="672.9" y="118" width="10.1" height="0.7"/><rect x="712.2" y="109" width="0.7" height="10.2"/><rect x="714" y="111" width="2.9" height="6.4"/><rect x="718.2" y="109" width="0.7" height="10.2"/><rect x="719.6" y="112" width="2.4" height="4.3"/><rect x="734.5" y="109" width="0.7" height="10.2"/><rect x="733.4" y="111" width="3.2" height="6.4"/><rect x="739.9" y="109" width="0.7" height="10.2"/><rect x="738.7" y="112" width="3.1" height="4.3"/><rect x="753.3" y="111" width="3.1" height="6.4"/><rect x="757.1" y="109" width="0.7" height="10.2"/><rect x="759.1" y="112" width="2.7" height="4.3"/><rect x="762.5" y="109" width="0.7" height="10.2"/><rect x="635.7" y="143.5" width="4.3" height="2.9"/><rect x="634.5" y="148.3" width="7.5" height="2.9"/><rect x="632.3" y="146.2" width="1.6" height="0.7"/><rect x="632.3" y="148.6" width="1.6" height="0.7"/><rect x="632.7" y="145.8" width="0.7" height="3.6"/><rect x="651" y="145" width="3.2" height="6.7"/><rect x="655.6" y="146" width="3.4" height="4.3"/><rect x="653.8" y="142.6" width="0.7" height="1.8"/><rect x="655.6" y="142.6" width="0.7" height="1.8"/><rect x="653.4" y="143.2" width="3.4" height="0.7"/></g>
<path d="M667.6 145.4 L669.6 143.4 L671.6 145.4 M667.6 148.2 L669.6 150.2 L671.6 148.2" fill="none" stroke="#6c6c6c" stroke-width="0.8"/><g fill="#cdcdcd"><rect x="739.4" y="143.7" width="1.4" height="1.4"/><rect x="739.4" y="146.8" width="1.4" height="1.4"/><rect x="739.4" y="149.9" width="1.4" height="1.4"/><rect x="742.5" y="143.7" width="1.4" height="1.4"/><rect x="742.5" y="149.9" width="1.4" height="1.4"/><rect x="745.6" y="143.7" width="1.4" height="1.4"/><rect x="745.6" y="146.8" width="1.4" height="1.4"/><rect x="745.6" y="149.9" width="1.4" height="1.4"/></g><path d="M748.4 146.8 L750.2 148.6 L752 146.8" fill="none" stroke="#cdcdcd" stroke-width="0.8"/><path d="M679.6 182.6 L681.8 184.8 L684 182.6" fill="none" stroke="#f0f0f0" stroke-width="1.1"/><path d="M749.2 181.4 L751.6 183.6 L749.2 185.8" fill="none" stroke="#f0f0f0" stroke-width="1.1"/><path d="M668.2 258 L670.4 255.8 L672.6 258 M668.2 260.4 L670.4 262.6 L672.6 260.4" fill="none" stroke="#e8e8e8" stroke-width="0.9"/><path d="M706.6 258 L709.2 260.4 L711.8 258" fill="none" stroke="#f4f4f4" stroke-width="1.2"/><path d="M671 270.4 h5.4 v7.2 h-5.4 z" fill="#f4f4f4"/><path d="M668.6 274 L671 272.2 V275.8Z" fill="#f4f4f4"/><path d="M671 274 h5.4" stroke="#2d2d2d" stroke-width="0.7"/><path d="M684.4 270.4 h3.4 v7.2 h-3.4 a3.6 3.6 0 0 1 0 -7.2z" fill="#c4c4c4"/><path d="M683 274 h4.8" stroke="#535353" stroke-width="0.7"/><path d="M694 270.4 h6.4 v7.2 h-6.4z" fill="#c4c4c4"/><path d="M696 274 h4.4" stroke="#535353" stroke-width="0.7"/><rect x="695.4" y="272" width="1" height="4" fill="#535353"/><path d="M668 285.8 h7.2 v3.4 h-3.6 v4 h-3.6z" fill="#f4f4f4"/><path d="M670 292.6 v-4.6 h5" fill="none" stroke="#2d2d2d" stroke-width="0.6"/><path d="M681 293.2 v-3.6 a3.8 3.8 0 0 1 3.8 -3.8 h3 v3.4 h-3.2 v4z" fill="#c4c4c4"/><path d="M683 293 v-4.6 h4.8" fill="none" stroke="#535353" stroke-width="0.6"/><path d="M694 293.2 v-4.4 l3 -3 h3.6 v3.4 h-3.2 v4z" fill="#c4c4c4"/><path d="M696 293 v-4.6 h4.6" fill="none" stroke="#535353" stroke-width="0.6"/><path d="M667.6 300.8 h2 v5.6 h6.2 v1.8 h-8.2z" fill="#f4f4f4"/><path d="M671.2 300.8 h1.6 v3.6 h3 v1.4 h-4.6z" fill="#f4f4f4"/><path d="M681.6 306 h7 v1.6 h-7z M684 301 h1.4 v5 h-1.4z M686.4 303.6 h1.6 v2.4 h-1.6z" fill="#c4c4c4"/><path d="M693.8 301.4 h1.6 v6.2 h-1.6z M695.4 306 h6 v1.6 h-6z M696.4 303 h3 v2.6 h-3z" fill="#c4c4c4"/><path d="M725 327 v-6.2 h15 v6.2 z" fill="none" stroke="#787878" stroke-width="0.8" stroke-dasharray="3.4 1.6"/><path d="M747 326.6 v-5.6 h14.4 v5.6 z" fill="none" stroke="#787878" stroke-width="0.8" stroke-dasharray="2 2.2 4.2 2.2"/><path d="M612 59.8 L614.9 53 h1 L618.8 59.8 h-1.1 l-0.8 -2 h-3.1 l-0.8 2z M614.2 56.8 h2.4 l-1.2 -3z" fill="#dadada"/><rect x="619.4" y="51.5" width="0.7" height="9.6" fill="#dadada"/><path d="M615.4 68.2 h3.6 v0.9 h-0.7 v7 h-0.9 v-7 h-0.9 v7 h-0.9 v-3.6 a2.2 2.2 0 0 1 -0.2 -4.3z" fill="#dadada"/><ellipse cx="615.6" cy="88" rx="2.5" ry="4.1" transform="rotate(14 615.6 88)" fill="none" stroke="#dadada" stroke-width="1.1"/><path d="M614.6 111.2 L617 105.2 h0.8 L620.2 111.2 h-0.9 l-0.6 -1.6 h-2.6 l-0.6 1.6z" fill="#dadada"/><circle cx="612.4" cy="111.6" r="1.5" fill="none" stroke="#dadada" stroke-width="0.7"/><rect x="612.6" y="112" width="2.4" height="2.4" fill="none" stroke="#dadada" stroke-width="0.7"/><path d="M616.6 123.2 h3.2 v0.8 h-0.6 v5.4 h-0.8 v-5.4 h-0.7 v5.4 h-0.8 v-2.8 a1.8 1.8 0 0 1 -0.3 -3.4z" fill="#dadada"/><circle cx="612.4" cy="127.6" r="1.5" fill="none" stroke="#dadada" stroke-width="0.7"/><rect x="612.6" y="128" width="2.4" height="2.4" fill="none" stroke="#dadada" stroke-width="0.7"/><path d="M614.6 145.4 h-3.4 v8.6 h8.6 v-3.4" fill="none" stroke="#dadada" stroke-width="0.9"/><path d="M615.4 149.6 L620 145 M616.8 144.8 h3.4 v3.4" fill="none" stroke="#dadada" stroke-width="0.9"/><rect x="610.8" y="163" width="5.6" height="4" rx="2" fill="none" stroke="#dadada" stroke-width="0.9"/><rect x="614.6" y="163" width="5.6" height="4" rx="2" fill="none" stroke="#dadada" stroke-width="0.9"/><path d="M615.5 183.8 L620.2 186.6 L615.5 189.4 L610.8 186.6Z" fill="#dadada"/><path d="M611.2 189.2 L615.5 191.8 L619.8 189.2" fill="none" stroke="#dadada" stroke-width="1"/></svg>


<!-- ===== MENU BAR ===== -->
<div class="t" style="left:4.9px;top:2.4px;font-size:11.2px;color:#cf8550;letter-spacing:-0.2px;-webkit-text-stroke:0.4px #cf8550;">Ai</div>
<svg style="left:24px;top:3.6px;" width="11" height="9.5" viewBox="0 0 11 9.5"><path d="M5.5 0.2 L0.2 5 L1.6 5 L1.6 9.3 L4.3 9.3 L4.3 6.3 L6.7 6.3 L6.7 9.3 L9.4 9.3 L9.4 5 L10.8 5 Z" fill="#d8d8d8"/></svg>
<div class="a" style="left:41.3px;top:3px;width:0.8px;height:10.5px;background:#474747;"></div>
<div class="t m" style="left:50.3px;transform:scaleX(0.9120);transform-origin:0 50%;">Archivo</div>
<div class="t m" style="left:81.6px;transform:scaleX(0.8552);transform-origin:0 50%;">Edición</div>
<div class="t m" style="left:111.2px;transform:scaleX(0.9162);transform-origin:0 50%;">Objeto</div>
<div class="t m" style="left:139.4px;transform:scaleX(0.8978);transform-origin:0 50%;">Texto</div>
<div class="t m" style="left:163.6px;transform:scaleX(0.8517);transform-origin:0 50%;">Seleccionar</div>
<div class="t m" style="left:205.7px;transform:scaleX(0.8731);transform-origin:0 50%;">Efecto</div>
<div class="t m" style="left:232.4px;transform:scaleX(0.8329);transform-origin:0 50%;">Ver</div>
<div class="t m" style="left:250.2px;transform:scaleX(0.8717);transform-origin:0 50%;">Ventana</div>
<div class="t m" style="left:282.4px;transform:scaleX(0.8876);transform-origin:0 50%;">Ayuda</div>
<div class="a" style="left:308px;top:3px;width:0.8px;height:10.5px;background:#474747;"></div>
<svg style="left:314.5px;top:4.5px;" width="10" height="7" viewBox="0 0 10 7"><rect x="0" y="0" width="4" height="7" fill="#c9c9c9"/><rect x="5" y="0" width="5" height="3" fill="#c9c9c9"/><rect x="5" y="4" width="2" height="3" fill="#c9c9c9"/><rect x="8" y="4" width="2" height="3" fill="#c9c9c9"/></svg>
<svg style="left:329.5px;top:6.5px;" width="5" height="3" viewBox="0 0 5 3"><path d="M0.3 0.3 L2.5 2.5 L4.7 0.3" fill="none" stroke="#e6e6e6" stroke-width="1.1"/></svg>
<div class="t m" style="left:576.6px;transform:scaleX(0.8460);transform-origin:0 50%;">Diseño</div>
<svg style="left:601.5px;top:7px;" width="5" height="3" viewBox="0 0 5 3"><path d="M0.3 0.3 L2.5 2.5 L4.7 0.3" fill="none" stroke="#d0d0d0" stroke-width="0.9"/></svg>
<div class="a" style="left:612.8px;top:3px;width:0.8px;height:10.5px;background:#474747;"></div>
<div class="a" style="left:619.7px;top:3px;width:94.5px;height:10px;background:#454545;border-radius:1px;"></div>
<svg style="left:623px;top:4.5px;" width="10" height="8" viewBox="0 0 10 8"><circle cx="3.2" cy="3" r="2.2" fill="none" stroke="#c8c8c8" stroke-width="0.9"/><path d="M1.6 4.8 L0.3 6.6" stroke="#c8c8c8" stroke-width="1"/><path d="M6.2 5.3 L8.2 5.3 L7.2 6.5 Z" fill="#c8c8c8"/></svg>
<div class="t" style="left:634px;top:4.4px;font-size:7.4px;color:#7e7e7e;transform:scaleX(0.8068);transform-origin:0 50%;">Buscar en Adobe Stock</div>
<div class="a" style="left:721px;top:0;width:12.5px;height:10.5px;background:#5d5d5d;"></div>
<div class="a" style="left:736px;top:0;width:12.5px;height:10.5px;background:#5d5d5d;"></div>
<div class="a" style="left:751px;top:0;width:17px;height:10.5px;background:#5d5d5d;"></div>
<div class="a" style="left:724.3px;top:6.3px;width:5.8px;height:1.2px;background:#dcdcdc;"></div>
<svg style="left:739.5px;top:2px;" width="7" height="6.5" viewBox="0 0 7 6.5"><rect x="0.4" y="2" width="4" height="4" fill="none" stroke="#dcdcdc" stroke-width="0.8"/><path d="M2 2 L2 0.4 L6.4 0.4 L6.4 4.4 L4.6 4.4" fill="none" stroke="#dcdcdc" stroke-width="0.8"/></svg>
<svg style="left:756px;top:2px;" width="6" height="6" viewBox="0 0 6 6"><path d="M0.4 0.4 L5.6 5.6 M5.6 0.4 L0.4 5.6" stroke="#e0e0e0" stroke-width="1"/></svg>

<!-- ===== CONTROL BAR ===== -->
<div class="a" style="left:3.8px;top:20.5px;width:0.9px;height:12px;background:#3f3f3f;"></div>
<div class="t" style="left:8.3px;top:23.9px;font-size:6.2px;color:#d0d0d0;transform:scaleX(0.8870);transform-origin:0 50%;">No hay selección</div>
<div class="a" style="left:80.7px;top:21px;width:11.3px;height:11px;background:#fff;"></div>
<svg style="left:80.7px;top:21px;" width="11.3" height="11" viewBox="0 0 11.3 11"><path d="M0.6 10.4 L10.7 0.6" stroke="#e8111a" stroke-width="1.1"/></svg>
<div class="a" style="left:92.8px;top:21px;width:8.2px;height:11px;background:#494949;"></div>
<svg style="left:94.6px;top:25.3px;" width="5" height="3" viewBox="0 0 5 3"><path d="M0.3 0.3 L2.5 2.5 L4.7 0.3" fill="none" stroke="#f0f0f0" stroke-width="1.15"/></svg>
<div class="a" style="left:105.3px;top:21px;width:10.9px;height:11px;background:#000;box-shadow:inset 0 0 0 0.7px #8a8a8a;"></div>
<svg style="left:108.3px;top:24px;" width="5" height="5" viewBox="0 0 5 5"><rect x="0.3" y="0.3" width="4.4" height="4.4" fill="#e6e6e6"/><path d="M1.2 1.2 L3.8 3.8 M3.8 1.2 L1.2 3.8" stroke="#222" stroke-width="0.7"/></svg>
<div class="a" style="left:117.8px;top:21px;width:8.2px;height:11px;background:#494949;"></div>
<svg style="left:119.6px;top:25.3px;" width="5" height="3" viewBox="0 0 5 3"><path d="M0.3 0.3 L2.5 2.5 L4.7 0.3" fill="none" stroke="#f0f0f0" stroke-width="1.15"/></svg>
<div class="t" style="left:134px;top:23.9px;font-size:6.2px;color:#d0d0d0;border-bottom:0.6px solid #a0a0a0;padding-bottom:0.4px;transform:scaleX(0.8664);transform-origin:0 50%;">Trazo:</div>
<svg style="left:154px;top:21.5px;" width="6" height="10" viewBox="0 0 6 10"><path d="M0.5 3.2 L3 0.7 L5.5 3.2 M0.5 6.8 L3 9.3 L5.5 6.8" fill="none" stroke="#d0d0d0" stroke-width="0.9"/></svg>
<div class="in" style="left:162.8px;top:22px;width:24.2px;height:9.8px;"></div>
<div class="t" style="left:165px;top:23.9px;font-size:6.2px;color:#e6e6e6;transform:scaleX(0.9198);transform-origin:0 50%;">1 pt</div>
<svg style="left:190.3px;top:25.3px;" width="5" height="3" viewBox="0 0 5 3"><path d="M0.3 0.3 L2.5 2.5 L4.7 0.3" fill="none" stroke="#f0f0f0" stroke-width="1.15"/></svg>
<div class="a" style="left:201.2px;top:21.2px;width:50.8px;height:10.6px;background:#e4e4e4;"></div>
<div class="a" style="left:205px;top:25.6px;width:18.8px;height:2px;background:#0a0a0a;"></div>
<div class="t" style="left:226.3px;top:24.2px;font-size:6.4px;color:#101010;transform:scaleX(0.8790);transform-origin:0 50%;">Uniforme</div>
<div class="a" style="left:253.2px;top:21.2px;width:7.6px;height:10.6px;background:#494949;"></div>
<svg style="left:254.6px;top:25.3px;" width="5" height="3" viewBox="0 0 5 3"><path d="M0.3 0.3 L2.5 2.5 L4.7 0.3" fill="none" stroke="#f0f0f0" stroke-width="1.15"/></svg>
<div class="a" style="left:265.2px;top:21.2px;width:49.3px;height:10.6px;background:#e4e4e4;"></div>
<div class="a" style="left:270.2px;top:25.8px;width:1.2px;height:1.2px;background:#222;border-radius:1px;"></div>
<div class="t" style="left:278.8px;top:23.9px;font-size:6.4px;color:#101010;transform:scaleX(0.8860);transform-origin:0 50%;">Redondo 3 ...</div>
<div class="a" style="left:315.6px;top:21.2px;width:7.6px;height:10.6px;background:#494949;"></div>
<svg style="left:317px;top:25.3px;" width="5" height="3" viewBox="0 0 5 3"><path d="M0.3 0.3 L2.5 2.5 L4.7 0.3" fill="none" stroke="#f0f0f0" stroke-width="1.15"/></svg>
<div class="t" style="left:328.3px;top:23.9px;font-size:6.2px;color:#d0d0d0;border-bottom:0.6px dotted #a0a0a0;padding-bottom:0.4px;transform:scaleX(0.8682);transform-origin:0 50%;">Opacidad:</div>
<div class="in" style="left:357px;top:22px;width:28px;height:9.8px;"></div>
<div class="t" style="left:359px;top:23.9px;font-size:6.2px;color:#e6e6e6;transform:scaleX(0.8529);transform-origin:0 50%;">100%</div>
<div class="a" style="left:386.5px;top:22px;width:7.5px;height:9.8px;background:#494949;"></div>
<svg style="left:388.8px;top:24.5px;" width="3" height="5" viewBox="0 0 3 5"><path d="M0.3 0.3 L2.5 2.5 L0.3 4.7" fill="none" stroke="#f0f0f0" stroke-width="1.15"/></svg>
<div class="t" style="left:399px;top:23.9px;font-size:6.2px;color:#d0d0d0;transform:scaleX(0.8897);transform-origin:0 50%;">Estilo:</div>
<div class="a" style="left:417.2px;top:21.2px;width:11.2px;height:10.8px;background:#e6e6e6;"></div>
<div class="a" style="left:430.2px;top:21.2px;width:7.6px;height:10.8px;background:#494949;"></div>
<svg style="left:431.6px;top:25.3px;" width="5" height="3" viewBox="0 0 5 3"><path d="M0.3 0.3 L2.5 2.5 L4.7 0.3" fill="none" stroke="#f0f0f0" stroke-width="1.15"/></svg>
<div class="a" style="left:445.7px;top:21.2px;width:57.8px;height:10.5px;box-sizing:border-box;border:0.7px solid #707070;border-radius:1.5px;background:#4b4b4b;"></div>
<div class="t" style="left:450.6px;top:23.8px;font-size:6.5px;color:#e8e8e8;transform:scaleX(0.8634);transform-origin:0 50%;">Ajustar documento</div>
<div class="a" style="left:506.5px;top:21.2px;width:41.3px;height:10.5px;box-sizing:border-box;border:0.7px solid #707070;border-radius:1.5px;background:#4b4b4b;"></div>
<div class="t" style="left:511.6px;top:23.8px;font-size:6.5px;color:#e8e8e8;transform:scaleX(0.8301);transform-origin:0 50%;">Preferencias</div>
<svg style="left:553.5px;top:21.5px;" width="9" height="10" viewBox="0 0 9 10"><path d="M0.5 2.5 H4 M0.5 5.5 H4 M2.2 1 V7 M5 1 H8.5 M6.8 1 V4.5" stroke="#c8c8c8" stroke-width="0.8" fill="none"/><path d="M4.6 4.2 L4.6 9.2 L5.9 8 L6.8 9.6 L7.5 9.2 L6.7 7.6 L8.3 7.5 Z" fill="#e0e0e0"/></svg>
<svg style="left:566px;top:25.3px;" width="5" height="3" viewBox="0 0 5 3"><path d="M0.3 0.3 L2.5 2.5 L4.7 0.3" fill="none" stroke="#f0f0f0" stroke-width="1.15"/></svg>
<svg style="left:710.5px;top:23px;" width="6" height="6" viewBox="0 0 6 6"><g fill="#6a6a6a"><rect x="0" y="0" width="2" height="2"/><rect x="4" y="0" width="2" height="2"/><rect x="0" y="4" width="2" height="2"/><rect x="4" y="4" width="2" height="2"/></g></svg>
<svg style="left:724.5px;top:22px;" width="9" height="9" viewBox="0 0 9 9"><rect x="0" y="0" width="2" height="2.2" fill="#d0d0d0"/><rect x="0" y="3.2" width="2" height="2.2" fill="#d0d0d0"/><rect x="0" y="6.4" width="2" height="2.2" fill="#d0d0d0"/><path d="M3.5 2.2 H6.3 A2.1 2.1 0 0 1 6.3 6.4 H3.5" fill="none" stroke="#d0d0d0" stroke-width="0.9"/></svg>
<svg style="left:736.5px;top:25.3px;" width="5" height="3" viewBox="0 0 5 3"><path d="M0.3 0.3 L2.5 2.5 L4.7 0.3" fill="none" stroke="#777" stroke-width="0.9"/></svg>
<svg style="left:751.5px;top:23.3px;" width="7" height="6" viewBox="0 0 7 6"><path d="M0 0.6 H1 M2 0.6 H7 M0 3 H1 M2 3 H7 M0 5.4 H1 M2 5.4 H7" stroke="#c8c8c8" stroke-width="0.9"/></svg>

<div class="a" style="left:442px;top:20.5px;width:0.8px;height:12px;background:#464646;"></div>
<div class="a" style="left:77.2px;top:20.5px;width:0.8px;height:12px;background:#4a4a4a;"></div>
<div class="a" style="left:4.7px;top:20.5px;width:0.7px;height:12px;background:#5e5e5e;"></div>
<!-- tab close & toolbar header -->
<svg style="left:145px;top:42.6px;" width="3.6" height="3.6" viewBox="0 0 3.6 3.6"><path d="M0.3 0.3 L3.3 3.3 M3.3 0.3 L0.3 3.3" stroke="#efefef" stroke-width="1.05"/></svg>
<svg style="left:3px;top:38px;" width="5" height="3.4" viewBox="0 0 5 3.4"><path d="M0.3 0.2 L1.8 1.7 L0.3 3.2 M2.8 0.2 L4.3 1.7 L2.8 3.2" fill="none" stroke="#c8c8c8" stroke-width="0.8"/></svg>
<div class="a" style="left:5.3px;top:45.6px;width:11.2px;height:1.4px;background:#424242;"></div>


<!-- ===== LEFT TOOLBAR ICONS ===== -->
<svg style="left:0;top:0;" width="24" height="412" viewBox="0 0 24 412">
<rect x="3.5" y="55" width="15.3" height="11.7" rx="1.6" fill="#2d2d2d"/>
<path d="M8 56.2 L8 65.8 L10.4 63.8 L15 62.6 Z" fill="none" stroke="#d6d6d6" stroke-width="0.95" stroke-linejoin="miter"/>
<path d="M8.2 69.8 L8.2 79 L10.6 76.9 L14.9 76 Z" fill="#c9c9c9"/>
<path d="M18.6 78.1 L18.6 80.3 L16.4 80.3 Z" fill="#d4d4d4"/>
<!-- pen -->
<g transform="translate(11.2 88) rotate(45)"><path d="M-2.2 -5.2 H2.2 V-3.6 H-2.2 Z M-2.2 -3 H2.2 L2.9 1 L0 5.6 L-2.9 1 Z" fill="#c9c9c9"/><path d="M0 5 V1.2" stroke="#535353" stroke-width="0.6"/><circle cx="0" cy="0.8" r="0.7" fill="#535353"/></g>
<path d="M18.6 91.3 L18.6 93.5 L16.4 93.5 Z" fill="#d4d4d4"/>
<!-- curvature -->
<g transform="translate(12.3 101.6) rotate(45)"><path d="M-2.1 -5 H2.1 V-3.5 H-2.1 Z M-2.1 -2.9 H2.1 L2.7 1 L0 5.2 L-2.7 1 Z" fill="#c9c9c9"/><path d="M0 4.6 V1.2" stroke="#535353" stroke-width="0.6"/></g>
<path d="M6.6 97.3 C8.3 99 5 102.2 5.6 104.4 C6 105.6 7.6 105.8 8.6 105.4" fill="none" stroke="#c9c9c9" stroke-width="0.8"/>
<!-- polygon -->
<path d="M6.3 114.6 L8.8 110.5 L13.8 110.5 L16.3 114.6 L13.8 118.7 L8.8 118.7 Z" fill="#6c6c6c" stroke="#c9c9c9" stroke-width="0.8"/>
<path d="M18.6 118.5 L18.6 120.7 L16.4 120.7 Z" fill="#d4d4d4"/>
<!-- brush -->
<path d="M15.9 123.7 L16.4 124.3 L11.3 130.6 L9.9 129.5 Z" fill="#c9c9c9"/>
<path d="M9.4 130 L10.9 131.2 C10.3 132.6 8.3 133 6.4 132.8 C7.6 132.2 7.8 130.6 9.4 130 Z" fill="#c9c9c9"/>
<path d="M18.6 131.8 L18.6 134.0 L16.4 134.0 Z" fill="#d4d4d4"/>
<!-- T -->
<path d="M7 137.9 H15.4 V140 H14.7 L14.4 138.9 H12 V144.6 L13.1 144.9 V145.7 H9.3 V144.9 L10.4 144.6 V138.9 H8 L7.7 140 H7 Z" fill="#c9c9c9"/>
<path d="M18.6 145.3 L18.6 147.5 L16.4 147.5 Z" fill="#d4d4d4"/>
<!-- rotate -->
<path d="M8.3 152.4 A4.3 4.3 0 1 1 7.2 157" fill="none" stroke="#c9c9c9" stroke-width="0.9"/>
<path d="M6.6 151 L9.8 151.6 L7.4 154.4 Z" fill="#c9c9c9"/>
<path d="M18.6 159.0 L18.6 161.2 L16.4 161.2 Z" fill="#d4d4d4"/>
<!-- eraser -->
<g transform="translate(11.3 168.6) rotate(-52)"><rect x="-4.6" y="-3" width="9.2" height="6" rx="0.6" fill="#c9c9c9"/><rect x="-4" y="-2.3" width="2.2" height="4.6" fill="#4a4a4a"/></g>
<path d="M18.6 172.5 L18.6 174.7 L16.4 174.7 Z" fill="#d4d4d4"/>
<!-- shape builder -->
<ellipse cx="9.6" cy="180.6" rx="3.4" ry="2.6" fill="none" stroke="#c9c9c9" stroke-width="0.8"/>
<ellipse cx="11.6" cy="182.4" rx="3.6" ry="2.6" fill="none" stroke="#c9c9c9" stroke-width="0.8"/>
<path d="M12.6 181.2 L12.6 187 L14 185.7 L16.8 185.3 Z" fill="#dcdcdc"/>
<!-- gradient -->
<defs><linearGradient id="g1" x1="0" x2="1"><stop offset="0" stop-color="#1e1e1e"/><stop offset="1" stop-color="#e8e8e8"/></linearGradient></defs>
<rect x="6.6" y="191.8" width="9.2" height="8" rx="0.8" fill="url(#g1)" stroke="#c9c9c9" stroke-width="0.8"/>
<path d="M18.6 199.5 L18.6 201.7 L16.4 201.7 Z" fill="#d4d4d4"/>
<!-- eyedropper -->
<g transform="translate(11 209.2) rotate(45)"><rect x="-1.7" y="-6.3" width="3.4" height="3.2" rx="1" fill="#c9c9c9"/><rect x="-2.3" y="-3.4" width="4.6" height="1.1" fill="#c9c9c9"/><path d="M-1.2 -2.3 H1.2 V4.6 L0 6.2 L-1.2 4.6 Z" fill="none" stroke="#c9c9c9" stroke-width="0.8"/></g>
<!-- symbol sprayer/puppet -->
<path d="M6.2 226 C8 226 8.6 224.6 9.6 223.4 C8.6 222 7.6 221.2 8.4 219.8 C9.3 218.6 10.6 219.6 10.6 221 C11.2 222.6 12.6 222.8 13.6 221.6 C14.8 220.4 16.4 221 16.6 223.4" fill="none" stroke="#c9c9c9" stroke-width="1.1"/>
<path d="M9.8 223.6 C10.6 224.8 12 225.4 13.4 225" fill="none" stroke="#c9c9c9" stroke-width="1"/>
<circle cx="6.8" cy="226" r="0.8" fill="#c9c9c9"/>
<!-- blend -->
<rect x="6.3" y="232.2" width="4.2" height="4.2" fill="#c9c9c9"/>
<rect x="9" y="234" width="4.4" height="4.4" rx="1.2" fill="#8a8a8a" stroke="#c9c9c9" stroke-width="0.6"/>
<circle cx="13.4" cy="237.6" r="2.7" fill="#535353" stroke="#c9c9c9" stroke-width="1"/>
<!-- artboard -->
<path d="M8.3 244.6 V248 M5.6 247 H9.4" stroke="#c9c9c9" stroke-width="0.8"/>
<path d="M8.8 247.6 H13.4 L15.2 249.4 V253.6 H8.8 Z" fill="#787878" stroke="#c9c9c9" stroke-width="0.8"/>
<!-- zoom -->
<circle cx="9.8" cy="262.2" r="3.3" fill="none" stroke="#c9c9c9" stroke-width="1"/>
<path d="M12.2 264.6 L15.6 267.6" stroke="#c9c9c9" stroke-width="1.3"/>
<path d="M18.8 266.6 L18.8 268.8 L16.6 268.8 Z" fill="#d4d4d4"/>
<!-- default fill/stroke + swap -->
<rect x="5" y="275.2" width="5.2" height="5.2" fill="#111" stroke="#d8d8d8" stroke-width="0.6"/>
<rect x="2.9" y="273.4" width="4.6" height="4.6" rx="1.6" fill="#f2f2f2" stroke="#333" stroke-width="0.5"/>
<path d="M15.4 275 C17.6 274.6 19.2 276 19.2 278.4" fill="none" stroke="#c9c9c9" stroke-width="0.9"/>
<path d="M14.4 275.2 L16.6 273.4 L16.8 276.8 Z M19.2 280.6 L17.4 278.2 L20.9 278.2 Z" fill="#c9c9c9"/>
<!-- stroke swatch -->
<rect x="10" y="290.4" width="8.7" height="10.2" fill="#0a0a0a" stroke="#dcdcdc" stroke-width="0.7"/>
<rect x="12.3" y="292.8" width="4.1" height="5.4" fill="#535353" stroke="#dcdcdc" stroke-width="0.6"/>
<!-- fill swatch -->
<rect x="3.1" y="284.4" width="10.9" height="10.6" fill="#fff" stroke="#3a3a3a" stroke-width="0.5"/>
<path d="M3.5 294.6 L13.6 284.8" stroke="#f0101a" stroke-width="1.2"/>
<!-- color modes -->
<rect x="3.8" y="305" width="4.4" height="4.4" fill="#98006a"/>
<defs><linearGradient id="g2" x1="0" x2="1"><stop offset="0" stop-color="#f4f4f4"/><stop offset="1" stop-color="#3a3a3a"/></linearGradient></defs>
<rect x="8.7" y="305" width="4.3" height="4.4" fill="url(#g2)"/>
<rect x="13.9" y="305" width="4.8" height="4.4" fill="#fff"/>
<path d="M14.1 309.2 L18.5 305.2" stroke="#f0101a" stroke-width="1"/>
<!-- draw mode -->
<circle cx="10.4" cy="316.8" r="2.4" fill="none" stroke="#c9c9c9" stroke-width="0.8"/>
<rect x="10.6" y="317" width="3.4" height="3.4" rx="0.6" fill="#c9c9c9"/>
<!-- screen mode -->
<rect x="6.4" y="330" width="6.6" height="5" fill="#6a6a6a" stroke="#c9c9c9" stroke-width="0.7"/>
<rect x="10" y="328" width="6.3" height="5" fill="#8a8a8a" stroke="#c9c9c9" stroke-width="0.7"/>
<rect x="10" y="328" width="6.3" height="1.3" fill="#c9c9c9"/>
<!-- more -->
<rect x="7.2" y="349.2" width="1.7" height="1.7" fill="#c9c9c9"/><rect x="10.3" y="349.2" width="1.7" height="1.7" fill="#c9c9c9"/><rect x="13.4" y="349.2" width="1.7" height="1.7" fill="#c9c9c9"/>
</svg>

<!-- ===== FLOATING PANELS ===== -->
<div class="a" style="left:27.4px;top:58.3px;width:36.4px;height:30.1px;background:#525252;border-radius:2px 2px 1px 1px;box-shadow:0 0 0 0.7px #434343;"></div>
<div class="a" style="left:27.4px;top:58.3px;width:36.4px;height:7.3px;background:#454545;border-radius:2px 2px 0 0;"></div>
<svg style="left:0;top:0" width="768" height="412" viewBox="0 0 768 412"><path d="M46.1 60.65 L48.30 62.25 L46.1 63.85 Z M48.50 60.65 L50.70 62.25 L48.50 63.85 Z" fill="#e0e0e0"/><path d="M57 60.35 L61.00 64.15 M61.00 60.35 L57 64.15" stroke="#e6e6e6" stroke-width="1.1"/></svg>
<div class="a" style="left:39.7px;top:67.80px;width:11.0px;height:1.5px;background:#3d3d3d;"></div>
<div class="a" style="left:554.5px;top:53.8px;width:21.3px;height:30.2px;background:#525252;border-radius:2px 2px 1px 1px;box-shadow:0 0 0 0.7px #434343;"></div>
<div class="a" style="left:554.5px;top:53.8px;width:21.3px;height:7.3px;background:#454545;border-radius:2px 2px 0 0;"></div>
<svg style="left:0;top:0" width="768" height="412" viewBox="0 0 768 412"><path d="M559 56.15 L561.20 57.75 L559 59.35 Z M561.40 56.15 L563.60 57.75 L561.40 59.35 Z" fill="#e0e0e0"/><path d="M569 55.85 L573.00 59.65 M573.00 55.85 L569 59.65" stroke="#e6e6e6" stroke-width="1.1"/></svg>
<div class="a" style="left:558.5px;top:63.70px;width:13.0px;height:1.5px;background:#3d3d3d;"></div>
<div class="a" style="left:33.7px;top:235.3px;width:21.4px;height:45.7px;background:#525252;border-radius:2px 2px 1px 1px;box-shadow:0 0 0 0.7px #434343;"></div>
<div class="a" style="left:33.7px;top:235.3px;width:21.4px;height:7.3px;background:#454545;border-radius:2px 2px 0 0;"></div>
<svg style="left:0;top:0" width="768" height="412" viewBox="0 0 768 412"><path d="M38.1 237.65 L40.30 239.25 L38.1 240.85 Z M40.50 237.65 L42.70 239.25 L40.50 240.85 Z" fill="#e0e0e0"/><path d="M48.1 237.35 L52.10 241.15 M52.10 237.35 L48.1 241.15" stroke="#e6e6e6" stroke-width="1.1"/></svg>
<div class="a" style="left:38.6px;top:245.00px;width:11.4px;height:1.5px;background:#3d3d3d;"></div>
<div class="a" style="left:36.6px;top:288.1px;width:21.9px;height:62.1px;background:#525252;border-radius:2px 2px 1px 1px;box-shadow:0 0 0 0.7px #434343;"></div>
<div class="a" style="left:36.6px;top:288.1px;width:21.9px;height:7.6px;background:#454545;border-radius:2px 2px 0 0;"></div>
<svg style="left:0;top:0" width="768" height="412" viewBox="0 0 768 412"><path d="M41.3 290.60 L43.50 292.20 L41.3 293.80 Z M43.70 290.60 L45.90 292.20 L43.70 293.80 Z" fill="#e0e0e0"/><path d="M51.4 290.30 L55.40 294.10 M55.40 290.30 L51.4 294.10" stroke="#e6e6e6" stroke-width="1.1"/></svg>
<div class="a" style="left:42px;top:298.10px;width:11.0px;height:1.5px;background:#3d3d3d;"></div>
<svg style="left:0;top:0" width="768" height="412" viewBox="0 0 768 412">
<!-- recolor icon -->
<circle cx="37.6" cy="79.2" r="4.5" fill="#b2b2b2" stroke="#dedede" stroke-width="0.9"/>
<path d="M36.6 74.2 h2 v-0.9 h-2z M36.6 84.2 h2 v0.9 h-2z M42.4 78.2 v2 h0.9 v-2z" fill="#e4e4e4"/>
<!-- gradient icon -->
<defs><linearGradient id="g3" x1="0" x2="1"><stop offset="0" stop-color="#1a1a1a"/><stop offset="1" stop-color="#ececec"/></linearGradient></defs>
<rect x="560.4" y="71.4" width="9.6" height="6.6" rx="0.8" fill="url(#g3)" stroke="#cfcfcf" stroke-width="0.8"/>
<!-- brushes icon -->
<rect x="42" y="257.4" width="5" height="4.2" fill="#d6d6d6"/><path d="M42 259.3 H47" stroke="#666" stroke-width="0.5"/>
<path d="M43 257 L41.4 253.6 L42.6 253.2 Z M44.5 257 L43.7 251 L45 251.6 Z M45.8 257 L47.6 253 L49 253.8 L46.8 257 Z" fill="#d6d6d6"/>
<!-- symbols (club) -->
<circle cx="44.4" cy="268.8" r="2.3" fill="#c9c9c9"/><circle cx="42.1" cy="271.8" r="2.3" fill="#c9c9c9"/><circle cx="46.7" cy="271.8" r="2.3" fill="#c9c9c9"/>
<path d="M44.4 271 L43.6 275.2 H45.2 Z M42.4 275.6 H46.4" fill="#c9c9c9" stroke="#c9c9c9" stroke-width="0.7"/>
<!-- transform icon -->
<rect x="45.6" y="305.4" width="7" height="7.2" fill="none" stroke="#c9c9c9" stroke-width="0.8"/>
<circle cx="45.8" cy="310.4" r="2.5" fill="#525252" stroke="#c9c9c9" stroke-width="0.8"/>
<circle cx="46.6" cy="311.6" r="1.5" fill="none" stroke="#c9c9c9" stroke-width="0.6"/>
<!-- pathfinder -->
<rect x="44" y="321" width="4.4" height="4.7" fill="#c9c9c9"/>
<rect x="46.8" y="323.8" width="5.4" height="5" fill="#e2e2e2"/>
<rect x="46.8" y="323.8" width="1.6" height="1.9" fill="#777"/>
<!-- CC -->
<ellipse cx="48.1" cy="341" rx="5.8" ry="4.2" fill="none" stroke="#c9c9c9" stroke-width="0.9"/>
<path d="M44.6 342 C44.6 339.6 47.4 339 48.4 341 C49.4 343 52 342.4 51.8 340.4 C51.6 338.8 49.6 338.6 48.8 339.8" fill="none" stroke="#c9c9c9" stroke-width="0.8"/>
</svg>
<!-- ===== STATUS BAR ===== -->
<div class="a" style="left:23.6px;top:399.6px;width:581px;height:9.4px;background:#535353;"></div>
<div class="a" style="left:267px;top:399.6px;width:327.5px;height:9.4px;background:#4a4a4a;"></div>
<div class="a" style="left:423px;top:401.4px;width:13.6px;height:6px;border-radius:3px;background:#6a6a6a;"></div>
<div class="in" style="left:25px;top:400.8px;width:28.8px;height:7.8px;background:#444;"></div>
<div class="t" style="left:26.9px;top:401.9px;font-size:6.2px;color:#e2e2e2;transform:scaleX(0.8905);transform-origin:0 50%;">66.67%</div>
<svg style="left:56.5px;top:403.9px;" width="4.6" height="2.8" viewBox="0 0 4.6 2.8"><path d="M0.3 0.3 L2.3 2.3 L4.3 0.3" fill="none" stroke="#d8d8d8" stroke-width="0.9"/></svg><svg style="left:0;top:0" width="768" height="412" viewBox="0 0 768 412"><g fill="#6e6e6e"><path d="M69.4 402.7 h0.9 v4.6 h-0.9z M73.7 402.7 v4.6 L70.7 405.0z"/><path d="M82.6 402.7 v4.6 L79.6 405.0z"/><path d="M125.6 402.7 v4.6 L128.6 405.0z"/><path d="M134.6 402.7 v4.6 L137.6 405.0z M137.8 402.7 h0.9 v4.6 h-0.9z"/></g><path d="M260.4 402.5 v5 L263.4 405.0z" fill="#d4d4d4"/><path d="M272.6 402.9 L270.6 405.0 L272.6 407.1" fill="none" stroke="#bdbdbd" stroke-width="0.8"/><path d="M588.2 402.9 L590.2 405.0 L588.2 407.1" fill="none" stroke="#bdbdbd" stroke-width="0.8"/></svg>
<div class="in" style="left:88px;top:400.8px;width:22px;height:7.8px;background:#444;"></div>
<div class="t" style="left:90.3px;top:401.9px;font-size:6.2px;color:#e2e2e2;">1</div>
<svg style="left:112.8px;top:403.9px;" width="4.6" height="2.8" viewBox="0 0 4.6 2.8"><path d="M0.3 0.3 L2.3 2.3 L4.3 0.3" fill="none" stroke="#d8d8d8" stroke-width="0.9"/></svg><div class="t" style="left:188.8px;top:402.1px;font-size:6.2px;color:#cfcfcf;transform:scaleX(0.8717);transform-origin:0 50%;">Selección</div>
<div class="a" style="left:594.5px;top:399.6px;width:9px;height:9.4px;background:#535353;"></div>
<div class="a" style="left:595px;top:218.4px;width:7.4px;height:14.6px;border-radius:3.5px;background:#6a6a6a;"></div>
<svg style="left:0;top:0" width="768" height="412" viewBox="0 0 768 412"><path d="M596.6 58.6 L598.8 56.4 L601 58.6" fill="none" stroke="#bdbdbd" stroke-width="0.8"/><path d="M596.6 394.2 L598.8 396.4 L601 394.2" fill="none" stroke="#bdbdbd" stroke-width="0.8"/></svg>
<div class="t" style="left:590.6px;top:54.5px;font-size:5.4px;color:#9c9c9c;">1</div>
<!-- taskbar strip -->
<div class="a" style="left:0;top:408.9px;width:768px;height:3.1px;background:#0d0d0d;"></div>
<div class="a" style="left:0;top:410.4px;width:768px;height:1.6px;background:linear-gradient(90deg,#10141a 0,#1a2430 170px,#2a3644 300px,#4a5662 480px,#55616c 545px,#222 556px,#1c1c1c 740px,#555 760px);"></div>
<div class="a" style="left:10.6px;top:410.6px;width:8.8px;height:1.4px;background:#8fb0d0;"></div>
<div class="a" style="left:103.8px;top:410.4px;width:32.2px;height:1.8px;background:#b4b4b4;"></div>
<div class="a" style="left:138px;top:410.4px;width:32.2px;height:1.8px;background:#9a9a9a;"></div>
<div class="a" style="left:138.6px;top:410.4px;width:6px;height:1.8px;background:#e4e08a;"></div>
<div class="a" style="left:243px;top:410.4px;width:31px;height:1.8px;background:#d8d8d8;"></div>

</body>
</html>
